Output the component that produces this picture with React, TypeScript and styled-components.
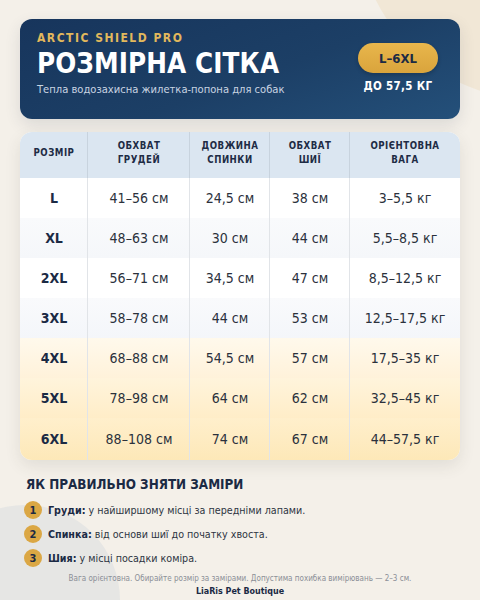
import React from "react";
import styled, { createGlobalStyle } from "styled-components";

const Global = createGlobalStyle`
  html, body { margin: 0; padding: 0; }
  body {
    width: 480px;
    height: 600px;
    overflow: hidden;
    background: #f4f0e9;
    font-family: "DejaVu Sans Condensed", "DejaVu Sans", "Noto Sans", sans-serif;
    font-stretch: condensed;
  }
`;

const Page = styled.div`
  position: relative;
  width: 480px;
  height: 600px;
  overflow: hidden;
  background: #f4f0e9;
  box-sizing: border-box;
  padding: 19px 20px 0 20px;
  display: flex;
  flex-direction: column;
`;

const Blob = styled.div<{ $top: number; $left: number; $size: number; $color: string }>`
  position: absolute;
  top: ${(p) => p.$top}px;
  left: ${(p) => p.$left}px;
  width: ${(p) => p.$size}px;
  height: ${(p) => p.$size}px;
  border-radius: 50%;
  background: ${(p) => p.$color};
  pointer-events: none;
`;

const Content = styled.div`
  position: relative;
  display: flex;
  flex-direction: column;
`;

const Hero = styled.header`
  height: 100px;
  box-sizing: border-box;
  border-radius: 12px;
  background: linear-gradient(160deg, #17355c 0%, #1c3f66 55%, #24507a 100%);
  box-shadow: 0 6px 16px rgba(40, 50, 70, 0.12);
  padding: 11px 22px 0 17px;
  display: flex;
  justify-content: space-between;
`;

const HeroText = styled.div`
  display: flex;
  flex-direction: column;
`;

const Kicker = styled.div`
  color: #e2b85c;
  font-weight: 700;
  font-size: 12px;
  letter-spacing: 1.5px;
  line-height: 16px;
`;

const Title = styled.h1`
  margin: 0;
  color: #ffffff;
  font-weight: 700;
  font-size: 27.5px;
  line-height: 34px;
  letter-spacing: 0.1px;
`;

const Subtitle = styled.div`
  color: #c9d4e2;
  font-size: 11.1px;
  line-height: 16px;
  margin-top: 2px;
`;

const BadgeCol = styled.div`
  display: flex;
  flex-direction: column;
  align-items: center;
  padding-top: 13px;
`;

const Pill = styled.div`
  width: 80px;
  height: 30px;
  border-radius: 15px;
  background: linear-gradient(180deg, #e8b64c 0%, #d9a43c 100%);
  color: #1b2a44;
  font-weight: 700;
  font-size: 13px;
  display: flex;
  align-items: center;
  justify-content: center;
  box-shadow: 0 2px 4px rgba(0, 0, 0, 0.2);
`;

const PillNote = styled.div`
  margin-top: 6px;
  color: #ffffff;
  font-weight: 700;
  font-size: 11.5px;
  letter-spacing: 0.3px;
`;

const TableCard = styled.div`
  margin-top: 13px;
  border-radius: 12px;
  overflow: hidden;
  background: #ffffff;
  box-shadow: 0 6px 16px rgba(60, 60, 50, 0.1);
`;

const Grid = styled.div`
  display: grid;
  grid-template-columns: 68px 102px 80px 80px 1fr;
`;

const HeadCell = styled.div<{ $last?: boolean }>`
  height: 46px;
  background: #dbe6f1;
  display: flex;
  align-items: center;
  justify-content: center;
  text-align: center;
  color: #1e2c45;
  font-weight: 700;
  font-size: 9.6px;
  line-height: 14px;
  letter-spacing: 0.5px;
  box-shadow: ${(p) => (p.$last ? "none" : "inset -1px 0 0 #c8d3de")};
  padding-bottom: 4px;
  box-sizing: border-box;
`;

const rowBg: string[] = [
  "#ffffff",
  "linear-gradient(180deg, #f9fafc 0%, #f5f7fa 100%)",
  "#ffffff",
  "linear-gradient(180deg, #f9fafc 0%, #f4f6fa 100%)",
  "linear-gradient(180deg, #fff9ec 0%, #fff2da 100%)",
  "linear-gradient(180deg, #fff4dc 0%, #ffedc8 100%)",
  "linear-gradient(180deg, #ffefcc 0%, #fde8b8 100%)",
];

const Cell = styled.div<{ $bg: string; $last?: boolean; $bold?: boolean; $tall?: boolean }>`
  height: ${(p) => (p.$tall ? 42 : 40)}px;
  background: ${(p) => p.$bg};
  display: flex;
  align-items: center;
  justify-content: center;
  color: ${(p) => (p.$bold ? "#1b2a44" : "#2b313c")};
  font-weight: ${(p) => (p.$bold ? 700 : 400)};
  font-size: 14px;
  box-shadow: ${(p) => (p.$last ? "none" : "inset -1px 0 0 #e1e4e8")};
  white-space: nowrap;
`;

const Section = styled.section`
  margin-top: 15px;
  padding-left: 6px;
  display: flex;
  flex-direction: column;
`;

const SectionTitle = styled.h2`
  margin: 0;
  color: #1b2a44;
  font-weight: 700;
  font-size: 13.35px;
  line-height: 20px;
`;

const Steps = styled.ol`
  list-style: none;
  margin: 6px 0 0 0;
  padding: 0;
  display: flex;
  flex-direction: column;
  gap: 6px;
`;

const Step = styled.li`
  display: flex;
  align-items: center;
  gap: 6px;
  font-size: 10.65px;
  color: #2d3442;
  height: 18px;
`;

const Num = styled.span`
  width: 18px;
  height: 18px;
  border-radius: 50%;
  background: #dba744;
  color: #1b2a44;
  font-weight: 700;
  font-size: 11px;
  display: flex;
  align-items: center;
  justify-content: center;
  margin-left: -2px;
  flex: none;
`;

const Label = styled.b`
  color: #1b2a44;
  font-weight: 700;
`;

const Footer = styled.footer`
  margin-top: 6px;
  display: flex;
  flex-direction: column;
  align-items: center;
`;

const Note = styled.div`
  color: #8b8f97;
  font-size: 8px;
  line-height: 12px;
`;

const Brand = styled.div`
  color: #1b2a44;
  font-weight: 700;
  font-size: 8.9px;
  line-height: 12px;
`;

const headers: React.ReactNode[] = [
  "РОЗМІР",
  <>ОБХВАТ<br />ГРУДЕЙ</>,
  <>ДОВЖИНА<br />СПИНКИ</>,
  <>ОБХВАТ<br />ШИЇ</>,
  <>ОРІЄНТОВНА<br />ВАГА</>,
];

const rows: string[][] = [
  ["L", "41–56 см", "24,5 см", "38 см", "3–5,5 кг"],
  ["XL", "48–63 см", "30 см", "44 см", "5,5–8,5 кг"],
  ["2XL", "56–71 см", "34,5 см", "47 см", "8,5–12,5 кг"],
  ["3XL", "58–78 см", "44 см", "53 см", "12,5–17,5 кг"],
  ["4XL", "68–88 см", "54,5 см", "57 см", "17,5–35 кг"],
  ["5XL", "78–98 см", "64 см", "62 см", "32,5–45 кг"],
  ["6XL", "88–108 см", "74 см", "67 см", "44–57,5 кг"],
];

const steps = [
  { n: 1, label: "Груди:", text: "у найширшому місці за передніми лапами." },
  { n: 2, label: "Спинка:", text: "від основи шиї до початку хвоста." },
  { n: 3, label: "Шия:", text: "у місці посадки коміра." },
];

export default function App() {
  return (
    <>
      <Global />
      <Page>
        <Blob $top={-260} $left={357} $size={360} $color="#f1e7d6" />
        <Blob $top={505} $left={-70} $size={190} $color="#e6e6e4" />
        <Content>
          <Hero>
            <HeroText>
              <Kicker>ARCTIC SHIELD PRO</Kicker>
              <Title>РОЗМІРНА СІТКА</Title>
              <Subtitle>Тепла водозахисна жилетка-попона для собак</Subtitle>
            </HeroText>
            <BadgeCol>
              <Pill>L–6XL</Pill>
              <PillNote>ДО 57,5 КГ</PillNote>
            </BadgeCol>
          </Hero>

          <TableCard>
            <Grid>
              {headers.map((h, i) => (
                <HeadCell key={i} $last={i === headers.length - 1}>
                  <span>{h}</span>
                </HeadCell>
              ))}
              {rows.map((r, ri) =>
                r.map((c, ci) => (
                  <Cell
                    key={`${ri}-${ci}`}
                    $bg={rowBg[ri]}
                    $bold={ci === 0}
                    $last={ci === r.length - 1}
                    $tall={ri === rows.length - 1}
                  >
                    {c}
                  </Cell>
                ))
              )}
            </Grid>
          </TableCard>

          <Section>
            <SectionTitle>ЯК ПРАВИЛЬНО ЗНЯТИ ЗАМІРИ</SectionTitle>
            <Steps>
              {steps.map((s) => (
                <Step key={s.n}>
                  <Num>{s.n}</Num>
                  <span>
                    <Label>{s.label}</Label> {s.text}
                  </span>
                </Step>
              ))}
            </Steps>
          </Section>

          <Footer>
            <Note>Вага орієнтовна. Обирайте розмір за замірами. Допустима похибка вимірювань — 2–3 см.</Note>
            <Brand>LiaRis Pet Boutique</Brand>
          </Footer>
        </Content>
      </Page>
    </>
  );
}
